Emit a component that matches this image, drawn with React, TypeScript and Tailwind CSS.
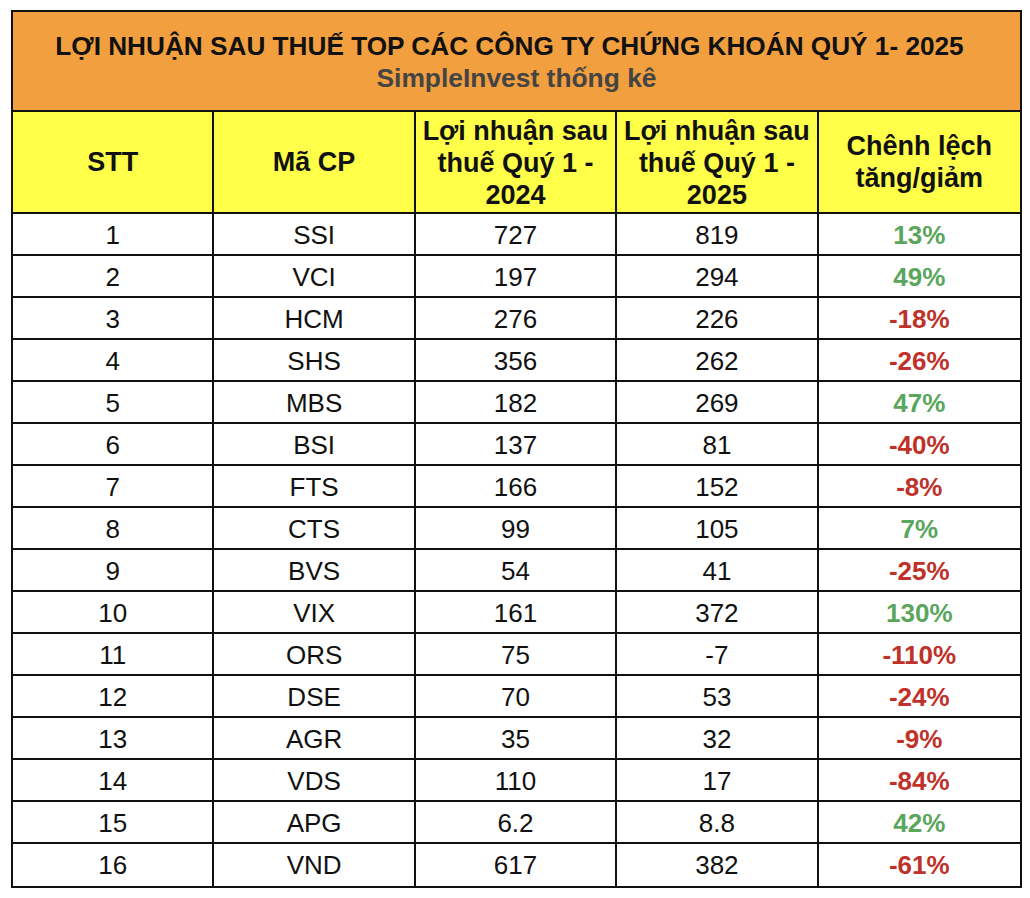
import React from "react";

const rows: [number, string, string, string, string, boolean][] = [
  [1, "SSI", "727", "819", "13%", true],
  [2, "VCI", "197", "294", "49%", true],
  [3, "HCM", "276", "226", "-18%", false],
  [4, "SHS", "356", "262", "-26%", false],
  [5, "MBS", "182", "269", "47%", true],
  [6, "BSI", "137", "81", "-40%", false],
  [7, "FTS", "166", "152", "-8%", false],
  [8, "CTS", "99", "105", "7%", true],
  [9, "BVS", "54", "41", "-25%", false],
  [10, "VIX", "161", "372", "130%", true],
  [11, "ORS", "75", "-7", "-110%", false],
  [12, "DSE", "70", "53", "-24%", false],
  [13, "AGR", "35", "32", "-9%", false],
  [14, "VDS", "110", "17", "-84%", false],
  [15, "APG", "6.2", "8.8", "42%", true],
  [16, "VND", "617", "382", "-61%", false],
];

export default function App() {
  return (
    <div className="w-[1030px] h-[898px] bg-white pt-[10px] pl-[11px] font-['Liberation_Sans',Arial,sans-serif] text-black">
      <div className="w-[1011px] border-2 border-[#111]">
        <div className="h-[100px] bg-[#F29F3F] border-b-2 border-[#111] flex flex-col items-center pt-[19px]">
          <div className="text-[26.2px] font-bold leading-[31px] text-[#111] mr-[14px]">
            LỢI NHUẬN SAU THUẾ TOP CÁC CÔNG TY CHỨNG KHOÁN QUÝ 1- 2025
          </div>
          <div className="text-[26.4px] font-bold leading-[32px] text-[#444]">
            SimpleInvest thống kê
          </div>
        </div>
        <div className="grid grid-cols-5 h-[102px] bg-[#FFFF4A] border-b-2 border-[#111] text-[27px] font-bold leading-[32px] text-[#111]">
          <div className="border-r-2 border-[#111] flex items-center justify-center">STT</div>
          <div className="border-r-2 border-[#111] flex items-center justify-center">Mã CP</div>
          <div className="border-r-2 border-[#111] flex items-center justify-center text-center pt-[2px]">
            Lợi nhuận sau<br />thuế Quý 1 -<br />2024
          </div>
          <div className="border-r-2 border-[#111] flex items-center justify-center text-center pt-[2px]">
            Lợi nhuận sau<br />thuế Quý 1 -<br />2025
          </div>
          <div className="flex items-center justify-center text-center">
            Chênh lệch<br />tăng/giảm
          </div>
        </div>
        {rows.map((r, i) => (
          <div
            key={r[0]}
            className={
              "grid grid-cols-5 h-[42px] text-[26px] leading-[43px] text-[#111] " +
              (i < rows.length - 1 ? "border-b-2 border-[#111]" : "")
            }
          >
            <div className="border-r-2 border-[#111] text-center">{r[0]}</div>
            <div className="border-r-2 border-[#111] text-center">{r[1]}</div>
            <div className="border-r-2 border-[#111] text-center">{r[2]}</div>
            <div className="border-r-2 border-[#111] text-center">{r[3]}</div>
            <div className={"text-center font-bold " + (r[5] ? "text-[#5AA65D]" : "text-[#C0312A]")}>{r[4]}</div>
          </div>
        ))}
      </div>
    </div>
  );
}
